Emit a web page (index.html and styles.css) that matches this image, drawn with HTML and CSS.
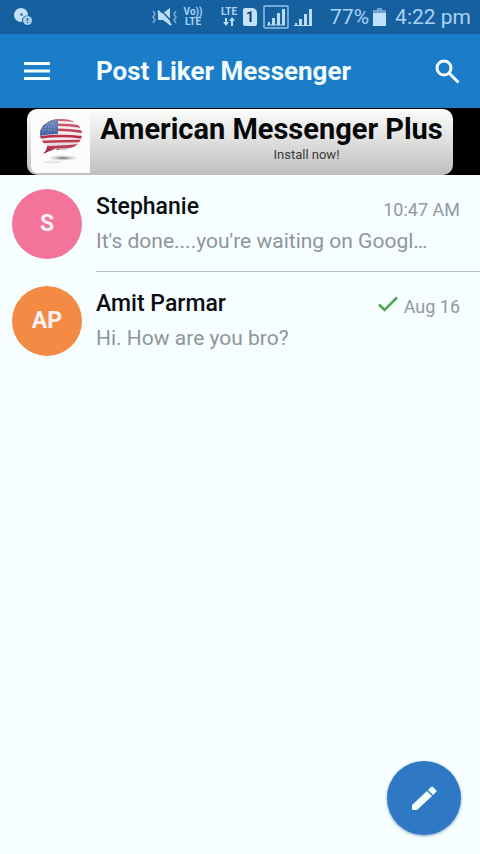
FILE: index.html
```html
<!DOCTYPE html>
<html lang="en">
<head>
<meta charset="utf-8">
<meta name="viewport" content="width=device-width, initial-scale=1">
<title>Post Liker Messenger</title>
<link rel="stylesheet" href="styles.css">
</head>
<body>
<div class="status">
  <svg class="notice" width="18" height="18" viewBox="0 0 18 18" aria-hidden="true">
    <circle cx="7" cy="7" r="7" fill="#c4e1f8"/>
    <circle cx="7.500" cy="6.500" r="1.500" fill="#4f86b4"/>
    <circle cx="13" cy="12.500" r="5" fill="#17609f"/>
    <circle cx="13.500" cy="12.500" r="4.500" fill="#a9d0ef"/>
    <path d="M13.500 10v3M13.500 14v1" stroke="#2a6da8" stroke-width="1.500"/>
  </svg>
  <svg class="mute" width="26" height="20" viewBox="0 0 26 20" fill="#b9dcf7" aria-hidden="true">
    <path d="M6 6h5l7-5v17l-7-5H6z"/>
    <path d="M8 2l12 13" stroke="#17609f" stroke-width="1.500"/>
    <path d="M6 4l13 14" stroke="#b9dcf7" stroke-width="2.500"/>
    <path d="M1 4l2 3-2 3 2 3-2 3M24 4l-2 3 2 3-2 3 2 3" fill="none" stroke="#78aad4" stroke-width="1.500"/>
  </svg>
  <span class="net volte"><span>Vo))</span><span>LTE</span></span>
  <span class="net data"><span>LTE</span>
    <svg width="12" height="10" viewBox="0 0 12 10" fill="#b9dcf7" aria-hidden="true"><path d="M2 1h2v4h2L3 9 0 5h2zM8 9h2V4h2L9 0 6 4h2z"/></svg>
  </span>
  <span class="sim">1</span>
  <svg class="boxed" width="26" height="24" viewBox="0 0 26 24" aria-hidden="true">
    <rect x="1" y="1" width="24" height="22" rx="1" fill="none" stroke="#8fc2eb" stroke-width="1.500"/>
    <path d="M5 20v-3h2v3zM9 20v-7h3v7zM14 20V8h3v12zM19 20V4h3v16z" fill="#b9dcf7"/>
    <path d="M4 20h18" stroke="#b9dcf7"/>
  </svg>
  <svg class="bars" width="18" height="24" viewBox="0 0 18 24" aria-hidden="true">
    <path d="M1 21v-3h2v3zM5 21v-7h3v7zM10 21V9h3v12zM15 21V4h3v17zM0 20h18v1H0z" fill="#b9dcf7"/>
  </svg>
  <span class="percent">77%</span>
  <svg class="battery" width="13" height="18" viewBox="0 0 13 18" aria-hidden="true">
    <path d="M4 0h5v2h4v16H0V2h4z" fill="#6fa3cf"/><path d="M0 5h13v13H0z" fill="#bfe0fa"/>
  </svg>
  <span class="clock">4:22 pm</span>
</div>
<header class="appbar">
  <button class="icon-button" type="button" aria-label="Open menu">
    <svg width="26" height="18" viewBox="0 0 26 18" stroke="#f2fdff" stroke-width="3" aria-hidden="true"><path d="M0 1.500h26M0 9h26M0 16.500h26"/></svg>
  </button>
  <h1>Post Liker Messenger</h1>
  <button class="icon-button" type="button" aria-label="Search">
    <svg width="26" height="26" viewBox="0 0 26 26" fill="none" stroke="#f2fdff" stroke-width="3" aria-hidden="true"><circle cx="10" cy="10" r="7"/><path d="M15 15l9.500 9.500"/></svg>
  </button>
</header>
<aside class="ad">
  <a class="banner" href="#">
    <span class="tile">
      <svg width="44" height="46" viewBox="0 0 44 46" aria-hidden="true">
        <defs>
          <clipPath id="bubble"><path d="M22 0C34 0 43 6 43 15S34 31 22 31c-2 0-4 0-6-1-3 1-6 2-12 5 3-3 4-5 4-8C4 24 1 20 1 15 1 6 10 0 22 0z"/></clipPath>
          <linearGradient id="shade" x1="0" y1="0" x2="0" y2="1"><stop offset="0" stop-color="#fff" stop-opacity=".3"/><stop offset=".5" stop-color="#fff" stop-opacity="0"/><stop offset="1" stop-color="#400010" stop-opacity=".45"/></linearGradient>
          <radialGradient id="shadow"><stop offset="0" stop-color="#666"/><stop offset="1" stop-color="#ccc" stop-opacity="0"/></radialGradient>
        </defs>
        <ellipse cx="24" cy="39" rx="16" ry="3" fill="url(#shadow)"/>
        <ellipse cx="14" cy="43" rx="9" ry="1.500" fill="#eee5e5"/>
        <g clip-path="url(#bubble)">
          <path d="M0 0h44v36H0z" fill="#f3e9ec"/>
          <path d="M0 2q22-3 44 1M0 7q22-3 44 1M0 12q22-3 44 1M0 18.500q22-3 44 0M0 23q22-1 44-1M0 28q22 1 44-2M0 33q10 0 20-2" fill="none" stroke="#bd2945" stroke-width="2.500"/>
          <path d="M0 28l15 1-2 7H0z" fill="#b12b46"/>
          <path d="M0 0h19v15q-9 0-19 2z" fill="#3d5f9e"/>
          <path d="M5 5h12M3 8h14M3 11h14" stroke="#8fa7cf" stroke-dasharray="1 2"/>
          <path d="M0 0h44v36H0z" fill="url(#shade)"/>
        </g>
      </svg>
    </span>
    <span class="copy"><strong>American Messenger Plus</strong><span class="action">Install now!</span></span>
  </a>
</aside>
<main>
  <ul class="chats">
    <li class="chat">
      <span class="avatar pink">S</span>
      <div class="body">
        <div class="line"><h2>Stephanie</h2><time>10:47 AM</time></div>
        <p>It's done....you're waiting on Googl…</p>
      </div>
    </li>
    <li class="chat">
      <span class="avatar orange">AP</span>
      <div class="body">
        <div class="line"><h2>Amit Parmar</h2>
          <svg width="20" height="16" viewBox="0 0 20 16" fill="none" stroke="#55a455" stroke-width="2.500" aria-hidden="true"><path d="M1 8.500L6.500 14 19 1.500"/></svg>
          <time>Aug 16</time></div>
        <p>Hi. How are you bro?</p>
      </div>
    </li>
  </ul>
</main>
<button class="compose" type="button" aria-label="New message">
  <svg width="26" height="26" viewBox="0 0 26 26" fill="#f4ffff" aria-hidden="true"><path d="M1 20L16 6l5 5L6 25H2q-1 0-1-1zM17 5l3-3q1-1 2 0l3 3q1 1 0 2l-3 3z"/></svg>
</button>
</body>
</html>
```

FILE: styles.css
```css
* { box-sizing: border-box; }

body {
  margin: 0;
  min-height: 100vh;
  background: #f6feff;
  color: #0b0d10;
  font-family: Roboto, "Liberation Sans", sans-serif;
}

h1, h2, p, ul { margin: 0; padding: 0; }
svg { display: block; flex: none; }
button { border: 0; padding: 0; cursor: pointer; }

.status {
  display: flex;
  align-items: center;
  height: 34px;
  padding: 0 9px 0 14px;
  background: #17609f;
  color: #a9d3f5;
  font-size: 21px;
  white-space: nowrap;
}

.mute { margin-left: auto; }
.volte { margin-left: 5px; }
.data { margin-left: 16px; }
.sim { margin-left: 4px; }
.boxed { margin-left: 6px; }
.bars { margin-left: 5px; }
.percent { margin-left: 18px; }
.battery { margin-left: 4px; }
.clock { margin-left: 9px; }

.net {
  display: flex;
  flex-direction: column;
  align-items: center;
  width: 20px;
  font-size: 10px;
  font-weight: 700;
  line-height: 10px;
}

.sim {
  width: 14px;
  height: 18px;
  border-radius: 2px 5px 2px 2px;
  background: #c3e3fa;
  color: #17406b;
  font-size: 14px;
  font-weight: 700;
  line-height: 18px;
  text-align: center;
}

.appbar {
  display: flex;
  align-items: center;
  height: 74px;
  padding: 0 8px 0 12px;
  background: #1b7cc8;
  color: #f2fdff;
}

.appbar h1 {
  flex: 1;
  margin-left: 34px;
  font-size: 26px;
  font-weight: 700;
}

.icon-button {
  display: grid;
  place-items: center;
  width: 50px;
  height: 50px;
  background: none;
}

.ad {
  padding: 1px 27px 0;
  background: #000;
}

.banner {
  display: flex;
  height: 66px;
  padding: 2px 4px;
  border-radius: 10px;
  background: linear-gradient(#fbfdfb, #c0bfbf);
  color: #050807;
  text-decoration: none;
}

.tile {
  display: grid;
  place-items: center;
  width: 59px;
  border-radius: 6px 0 0 6px;
  background: #fcfcfc;
}

.copy {
  display: flex;
  flex: 1;
  flex-direction: column;
  align-items: center;
  padding-left: 4px;
  font-size: 13px;
  line-height: 16px;
  white-space: nowrap;
}

.copy strong {
  font-size: 29px;
  font-weight: 700;
  line-height: 36px;
}

.action {
  padding-left: 70px;
  color: #3a3a3a;
}

.chats { list-style: none; }

.chat {
  display: flex;
  align-items: center;
  gap: 14px;
  height: 97px;
  padding-left: 12px;
}

.avatar {
  display: grid;
  place-items: center;
  flex: none;
  width: 70px;
  height: 70px;
  border-radius: 50%;
  color: #fdf1f5;
  font-size: 23px;
  font-weight: 700;
}

.pink { background: #f4739b; }
.orange { background: #f38b45; }

.body {
  flex: 1;
  min-width: 0;
  height: 97px;
  padding: 14px 20px 0 0;
  border-bottom: 1px solid #b9c2c6;
}

.chat:last-child .body { border-bottom-color: transparent; }

.line {
  display: flex;
  align-items: center;
  gap: 6px;
}

.line h2 {
  flex: 1;
  font-size: 23px;
  font-weight: 500;
  line-height: 36px;
}

.line time {
  padding-top: 4px;
  color: #92999d;
  font-size: 18px;
}

.body p {
  overflow: hidden;
  color: #8f969a;
  font-size: 21px;
  line-height: 32px;
  text-overflow: ellipsis;
  white-space: nowrap;
}

.compose {
  position: fixed;
  right: 19px;
  bottom: 19px;
  display: grid;
  place-items: center;
  width: 74px;
  height: 74px;
  border-radius: 50%;
  background: #2f79c4;
  box-shadow: 0 1px 3px #7d9fbd;
}
```
